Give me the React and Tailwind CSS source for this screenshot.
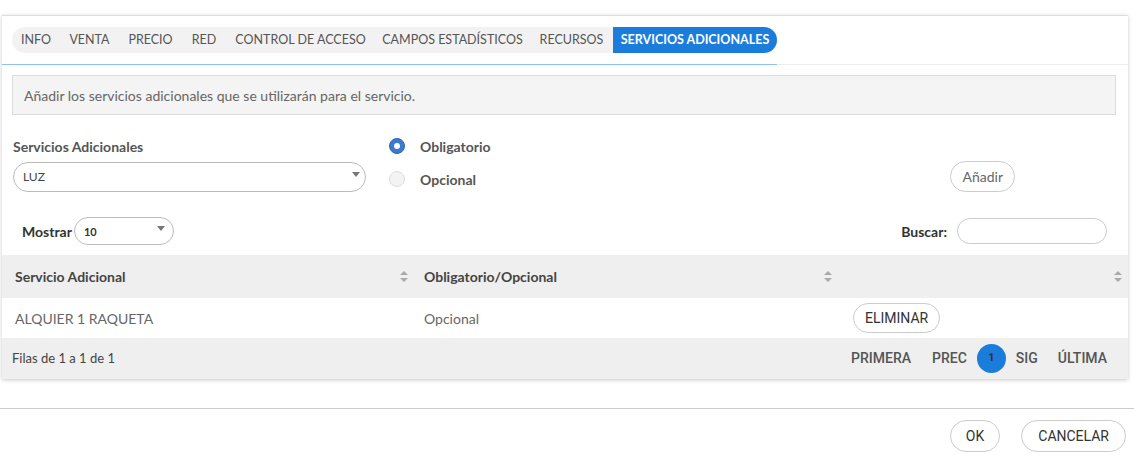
import React from 'react';

const tabs = [
    ['INFO', 'w-[48px]'],
    ['VENTA', 'w-[59px]'],
    ['PRECIO', 'w-[63px]'],
    ['RED', 'w-[44px]'],
    ['CONTROL DE ACCESO', 'w-[149px]'],
    ['CAMPOS ESTADÍSTICOS', 'w-[155px]'],
    ['RECURSOS', 'w-[83px]'],
    ['SERVICIOS ADICIONALES', 'w-[164px]'],
];

const SortIcon = () => (
    <svg width="8" height="11" viewBox="0 0 8 11" className="text-[#aaa]">
        <path d="M4 0 L8 4 H0 Z M4 11 L0 7 H8 Z" fill="currentColor" />
    </svg>
);

const Caret = () => (
    <svg width="8" height="5" viewBox="0 0 8 5"><path d="M0 0 H8 L4 5 Z" fill="#777" /></svg>
);

const App = () => {
    return (
        <div className="w-[1134px] h-[455px] bg-white text-[#555] font-['Lato','Open_Sans',sans-serif] overflow-hidden">
            <div className="pt-[15px]">
                {/* Main card */}
                <div className="mx-[2px] w-[1126px] bg-white shadow-[0_1px_4px_rgba(0,0,0,0.22)] border-t border-[#ddd]">
                    <div className="px-[10px] pt-[11px]">
                        <div className="flex items-center w-[765px] h-[26px] bg-[#f2f2f2] rounded-full text-[12.5px] whitespace-nowrap">
                            {tabs.map(([t, w], i) => (
                                <div
                                    key={t}
                                    className={i === tabs.length - 1
                                        ? `${w} h-full flex items-center justify-center bg-[#1a7ddb] text-white font-bold rounded-r-full`
                                        : `${w} h-full flex items-center justify-center text-[#555]`}
                                >
                                    {t}
                                </div>
                            ))}
                        </div>
                    </div>
                    <div className="flex mt-[11px]">
                        <div className="w-[775px] h-px bg-[#8ec3ef]"></div>
                        <div className="flex-1 h-px bg-[#eee]"></div>
                    </div>

                    <div className="px-[10px] pr-[12px] pt-[10px]">
                        <div className="h-[40px] flex items-center px-[11px] bg-[#f4f4f4] border border-[#dcdcdc] text-[14px] text-[#666]">
                            Añadir los servicios adicionales que se utilizarán para el servicio.
                        </div>

                        <div className="flex mt-[22px]">
                            <div className="w-[353px] ml-px">
                                <div className="text-[14px] font-bold text-[#555] leading-[20px]">Servicios Adicionales</div>
                                <div className="mt-[5px] h-[30px] rounded-full border border-[#bbb] flex items-center justify-between pl-[9px] pr-[5px] text-[12px] text-[#444]">
                                    <span>LUZ</span>
                                    <span className="-mt-[6px]"><Caret /></span>
                                </div>
                            </div>
                            <div className="ml-[23px] flex flex-col gap-[13px] -mt-[1px]">
                                <div className="flex items-center gap-[15px] h-[20px]">
                                    <span className="w-[16px] h-[16px] rounded-full bg-[#3a7bd0] flex items-center justify-center border border-[#2d66b5]">
                                        <span className="w-[6px] h-[6px] rounded-full bg-white"></span>
                                    </span>
                                    <span className="text-[14px] font-bold text-[#555]">Obligatorio</span>
                                </div>
                                <div className="flex items-center gap-[15px] h-[20px]">
                                    <span className="w-[16px] h-[16px] rounded-full bg-[#f3f3f3] border border-[#ddd]"></span>
                                    <span className="text-[14px] font-bold text-[#555]">Opcional</span>
                                </div>
                            </div>
                            <div className="ml-auto mr-[101px] pt-[24px]">
                                <button className="h-[31px] px-[11px] rounded-full border border-[#ccc] text-[14px] text-[#666] bg-white">Añadir</button>
                            </div>
                        </div>

                        <div className="flex items-center mt-[25px] h-[28px]">
                            <span className="ml-[10px] text-[14px] font-bold text-[#333]">Mostrar</span>
                            <div className="ml-[2px] w-[100px] h-[28px] rounded-full border border-[#bbb] flex items-center justify-between pl-[9px] pr-[8px]">
                                <span className="text-[11px] font-bold text-[#333] mt-[3px]">10</span>
                                <span className="-mt-[5px]"><Caret /></span>
                            </div>
                            <span className="ml-auto text-[14px] font-bold text-[#333]">Buscar:</span>
                            <div className="ml-[10px] mr-[9px] w-[150px] h-[26px] rounded-full border border-[#ccc]"></div>
                        </div>
                    </div>

                    {/* Table */}
                    <div className="mt-[10px]">
                        <div className="flex h-[43px] bg-[#efefef] text-[14px] font-bold text-[#444] items-center">
                            <div className="w-[410px] pl-[13px] pr-[4px] flex items-center justify-between">
                                <span>Servicio Adicional</span><SortIcon />
                            </div>
                            <div className="w-[424px] pl-[12px] pr-[4px] flex items-center justify-between">
                                <span>Obligatorio/Opcional</span><SortIcon />
                            </div>
                            <div className="flex-1 pr-[6px] flex justify-end"><SortIcon /></div>
                        </div>
                        <div className="flex h-[40px] items-center text-[14px] text-[#666] bg-white">
                            <div className="w-[410px] pl-[13px]">ALQUIER 1 RAQUETA</div>
                            <div className="w-[424px] pl-[12px]">Opcional</div>
                            <div className="flex-1 pl-[17px]">
                                <button className="h-[30px] px-[11px] rounded-full border border-[#ccc] bg-white font-['Roboto',sans-serif] text-[14px] text-[#333]">ELIMINAR</button>
                            </div>
                        </div>
                        <div className="flex h-[41px] items-center bg-[#efefef] pl-[10px] pr-[21px]">
                            <span className="text-[13px] text-[#444]">Filas de 1 a 1 de 1</span>
                            <div className="ml-auto flex items-center font-['Roboto',sans-serif] text-[14px] font-medium text-[#555]">
                                <span>PRIMERA</span>
                                <span className="ml-[21px]">PREC</span>
                                <span className="ml-[10px] w-[29px] h-[29px] rounded-full bg-[#1a7ddb] flex items-center justify-center text-[11px] font-bold text-[#333]">1</span>
                                <span className="ml-[10px]">SIG</span>
                                <span className="ml-[20px]">ÚLTIMA</span>
                            </div>
                        </div>
                    </div>
                </div>

                <div className="mt-[29px] h-px bg-[#ccc]"></div>
                <div className="flex justify-end gap-[21px] pt-[11px] pr-[8px] font-['Roboto',sans-serif]">
                    <button className="h-[32px] px-[15px] rounded-full border border-[#ccc] text-[14px] text-[#333]">OK</button>
                    <button className="h-[32px] px-[16px] rounded-full border border-[#ccc] text-[14px] text-[#333]">CANCELAR</button>
                </div>
            </div>
        </div>
    );
};

export default App;
